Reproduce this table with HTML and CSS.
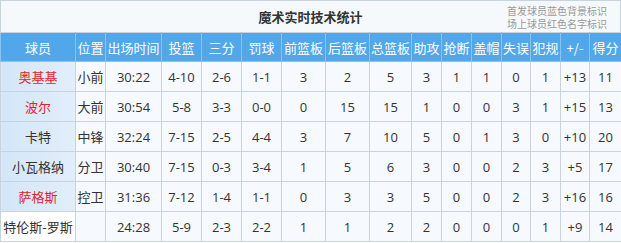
FILE: index.html
```html
<!DOCTYPE html>
<html lang="zh">
<head>
<meta charset="utf-8">
<link rel="stylesheet" href="styles.css">
</head>
<body>
<div class="panel">
  <div class="title-bar">
    <div class="title">魔术实时技术统计</div>
    <div class="legend">
      <div>首发球员蓝色背景标识</div>
      <div>场上球员红色名字标识</div>
    </div>
  </div>
  <table class="stats">
    <colgroup>
      <col class="c-name"><col class="c-pos"><col class="c-time"><col class="c-40"><col class="c-40"><col class="c-40">
      <col class="c-44"><col class="c-44"><col class="c-42"><col class="c-30"><col class="c-30"><col class="c-30">
      <col class="c-29"><col class="c-30"><col class="c-29"><col class="c-pts">
    </colgroup>
    <thead>
      <tr><th>球员</th><th>位置</th><th>出场时间</th><th>投篮</th><th>三分</th><th>罚球</th><th>前篮板</th><th>后篮板</th><th>总篮板</th><th>助攻</th><th>抢断</th><th>盖帽</th><th>失误</th><th>犯规</th><th>+/-</th><th>得分</th></tr>
    </thead>
    <tbody>
      <tr><td class="name starter oncourt">奥基基</td><td>小前</td><td>30:22</td><td>4-10</td><td>2-6</td><td>1-1</td><td>3</td><td>2</td><td>5</td><td>3</td><td>1</td><td>1</td><td>0</td><td>1</td><td>+13</td><td>11</td></tr>
      <tr><td class="name starter oncourt">波尔</td><td>大前</td><td>30:54</td><td>5-8</td><td>3-3</td><td>0-0</td><td>0</td><td>15</td><td>15</td><td>1</td><td>0</td><td>0</td><td>3</td><td>1</td><td>+15</td><td>13</td></tr>
      <tr><td class="name starter">卡特</td><td>中锋</td><td>32:24</td><td>7-15</td><td>2-5</td><td>4-4</td><td>3</td><td>7</td><td>10</td><td>5</td><td>0</td><td>1</td><td>3</td><td>0</td><td>+10</td><td>20</td></tr>
      <tr><td class="name starter">小瓦格纳</td><td>分卫</td><td>30:40</td><td>7-15</td><td>0-3</td><td>3-4</td><td>1</td><td>5</td><td>6</td><td>3</td><td>0</td><td>0</td><td>2</td><td>3</td><td>+5</td><td>17</td></tr>
      <tr><td class="name starter oncourt">萨格斯</td><td>控卫</td><td>31:36</td><td>7-12</td><td>1-4</td><td>1-1</td><td>0</td><td>3</td><td>3</td><td>5</td><td>0</td><td>0</td><td>2</td><td>3</td><td>+16</td><td>16</td></tr>
      <tr><td class="name">特伦斯-罗斯</td><td></td><td>24:28</td><td>5-9</td><td>2-3</td><td>2-2</td><td>1</td><td>1</td><td>2</td><td>2</td><td>0</td><td>0</td><td>0</td><td>1</td><td>+9</td><td>14</td></tr>
    </tbody>
  </table>
</div>
</body>
</html>
```
FILE: styles.css
```css
html, body {
  margin: 0;
  padding: 0;
  background: #ffffff;
}
body {
  font-family: "Open Sans", "Noto Sans CJK SC", sans-serif;
  font-size: 13px;
  color: #333333;
}
.panel {
  width: 621px;
}
.title-bar {
  border: 1px solid #c9d3dd;
  border-bottom: none;
  background: #f6f9fc;
  display: flex;
  align-items: center;
  justify-content: center;
  position: relative;
  box-sizing: border-box;
  height: 32px;
}
.title {
  font-family: "Noto Sans CJK SC", sans-serif;
  font-weight: bold;
  font-size: 13px;
  color: #333333;
}
.legend {
  position: absolute;
  right: 13px;
  top: 3px;
  font-family: "Noto Sans CJK SC", sans-serif;
  font-size: 10px;
  line-height: 13px;
  color: #9a9a9a;
  text-align: right;
}
.stats {
  width: 621px;
  border-collapse: collapse;
  table-layout: fixed;
}
.stats th, .stats td {
  border: 1px solid #c9d3dd;
  padding: 0;
  text-align: center;
  white-space: nowrap;
  overflow: hidden;
}
.stats th {
  height: 28px;
  background: #52a7ea;
  color: #ffffff;
  font-family: "Noto Sans CJK SC", sans-serif;
  font-weight: normal;
  font-size: 13px;
  border-color: #8cc2ee;
  border-top-color: #c9d3dd;
}
.stats td {
  height: 29px;
  background: #f6f9fd;
  color: #333333;
}
.stats td.name {
  font-family: "Noto Sans CJK SC", sans-serif;
  background: #ffffff;
}
.stats td.name.starter {
  background: linear-gradient(to right, #d3e6f8, #e2eefa);
}
.stats td.oncourt {
  color: #e0242d;
}
.c-name { width: 75px; }
.c-pos { width: 30px; }
.c-time { width: 56px; }
.c-40 { width: 40px; }
.c-44 { width: 44px; }
.c-42 { width: 42px; }
.c-30 { width: 30px; }
.c-29 { width: 29px; }
.c-pts { width: 32px; }
```
